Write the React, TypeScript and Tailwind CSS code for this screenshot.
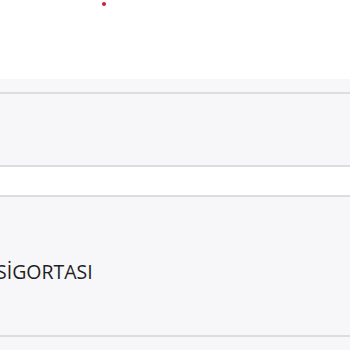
export default function App() {
  return (
    <div className="h-[350px] w-[350px] overflow-hidden bg-white font-['Open_Sans',sans-serif] text-[#1f1f1f]">
      {/* top area with marker dot */}
      <div className="relative h-[79px] bg-white">
        <span className="absolute left-[102px] top-[2px] h-[4px] w-[4px] rounded-full bg-[#c4203c]" />
      </div>

      <div className="h-[15px] border-b-2 border-[#dddde0] bg-[#f7f7fa]" />
      <div className="h-[73px] border-b-2 border-[#dddde0] bg-[#f7f7fa]" />
      <div className="h-[28px] bg-white" />
      <div className="h-[142px] border-y-2 border-[#dddde0] bg-[#f7f7fa] pt-[64px]">
        <span className="-ml-[4px] block text-[19.5px] leading-[22px]">SİGORTASI</span>
      </div>
      <div className="h-[20px] bg-[#f7f7fa]" />
    </div>
  );
}
